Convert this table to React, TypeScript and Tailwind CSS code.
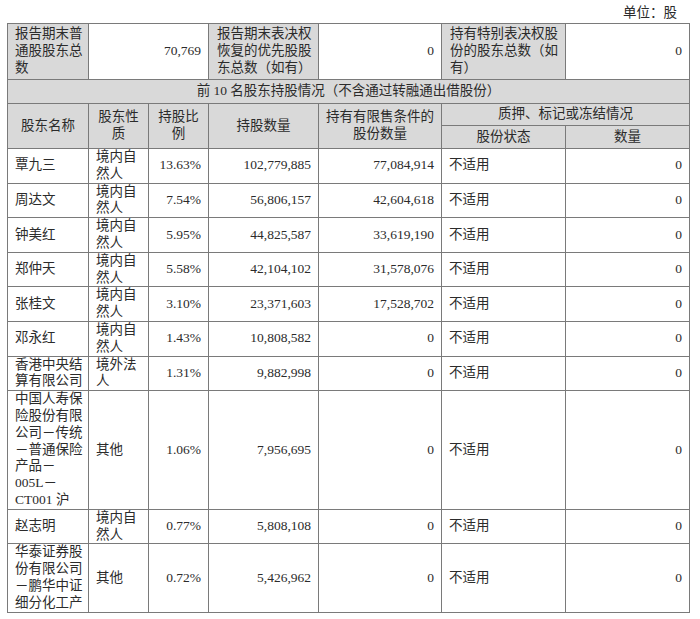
const rows = [
  { name: '覃九三', kind: '境内自然人', pct: '13.63%', shares: '102,779,885', limited: '77,084,914' },
  { name: '周达文', kind: '境内自然人', pct: '7.54%', shares: '56,806,157', limited: '42,604,618' },
  { name: '钟美红', kind: '境内自然人', pct: '5.95%', shares: '44,825,587', limited: '33,619,190' },
  { name: '郑仲天', kind: '境内自然人', pct: '5.58%', shares: '42,104,102', limited: '31,578,076' },
  { name: '张桂文', kind: '境内自然人', pct: '3.10%', shares: '23,371,603', limited: '17,528,702' },
  { name: '邓永红', kind: '境内自然人', pct: '1.43%', shares: '10,808,582', limited: '0' },
  { name: '香港中央结算有限公司', kind: '境外法人', pct: '1.31%', shares: '9,882,998', limited: '0' },
  { name: '中国人寿保\n险股份有限\n公司－传统\n－普通保险\n产品－\n005L－\nCT001 沪', kind: '其他', pct: '1.06%', shares: '7,956,695', limited: '0' },
  { name: '赵志明', kind: '境内自然人', pct: '0.77%', shares: '5,808,108', limited: '0' },
  { name: '华泰证券股份有限公司－鹏华中证细分化工产', kind: '其他', pct: '0.72%', shares: '5,426,962', limited: '0' },
]

const cell = 'border border-[#7a7a7a] px-[7px] py-0 align-middle'
const gray = 'bg-[#d9d9d9]'

export default function App() {
  return (
    <div className="min-h-screen bg-white text-[#2b2b2b] text-[13.5px] leading-[16.8px] [font-family:'Liberation_Serif','Noto_Sans_CJK_SC',serif]">
      <div className="pl-[7px] w-[689px]">
        <div className="h-[23px] pt-[5px] pr-[12px] text-right">单位：股</div>
        <table className="w-[682px] table-fixed border-collapse">
          <colgroup>
            <col className="w-[81px]" />
            <col className="w-[60px]" />
            <col className="w-[60px]" />
            <col className="w-[110px]" />
            <col className="w-[123px]" />
            <col className="w-[124px]" />
            <col className="w-[124px]" />
          </colgroup>
          <tbody>
            <tr className="h-[56px]">
              <td className={`${cell} ${gray} pr-[4px]`}>报告期末普通股股东总数</td>
              <td colSpan={2} className={`${cell} text-right`}>70,769</td>
              <td className={`${cell} ${gray} pl-[8px] pr-[4px]`}>报告期末表决权恢复的优先股股东总数（如有）</td>
              <td className={`${cell} text-right`}>0</td>
              <td className={`${cell} ${gray} pl-[8px] pr-[4px]`}>持有特别表决权股份的股东总数（如有）</td>
              <td className={`${cell} text-right`}>0</td>
            </tr>
            <tr className="h-[24px]">
              <td colSpan={7} className={`${cell} ${gray} text-center`}>
                前 10 名股东持股情况（不含通过转融通出借股份）
              </td>
            </tr>
            <tr className="h-[22px]">
              <td rowSpan={2} className={`${cell} ${gray} text-center`}>股东名称</td>
              <td rowSpan={2} className={`${cell} ${gray} text-center`}>股东性质</td>
              <td rowSpan={2} className={`${cell} ${gray} text-center`}>持股比例</td>
              <td rowSpan={2} className={`${cell} ${gray} text-center`}>持股数量</td>
              <td rowSpan={2} className={`${cell} ${gray} text-center px-[4px]`}>持有有限售条件的股份数量</td>
              <td colSpan={2} className={`${cell} ${gray} text-center`}>质押、标记或冻结情况</td>
            </tr>
            <tr className="h-[23px]">
              <td className={`${cell} ${gray} text-center`}>股份状态</td>
              <td className={`${cell} ${gray} text-center`}>数量</td>
            </tr>
            {rows.map((r) => (
              <tr key={r.name}>
                <td className={`${cell} pr-[4px] break-all whitespace-pre-line`}>{r.name}</td>
                <td className={`${cell} pr-[4px]`}>{r.kind}</td>
                <td className={`${cell} text-right`}>{r.pct}</td>
                <td className={`${cell} text-right`}>{r.shares}</td>
                <td className={`${cell} text-right`}>{r.limited}</td>
                <td className={cell}>不适用</td>
                <td className={`${cell} text-right`}>0</td>
              </tr>
            ))}
          </tbody>
        </table>
      </div>
    </div>
  )
}
